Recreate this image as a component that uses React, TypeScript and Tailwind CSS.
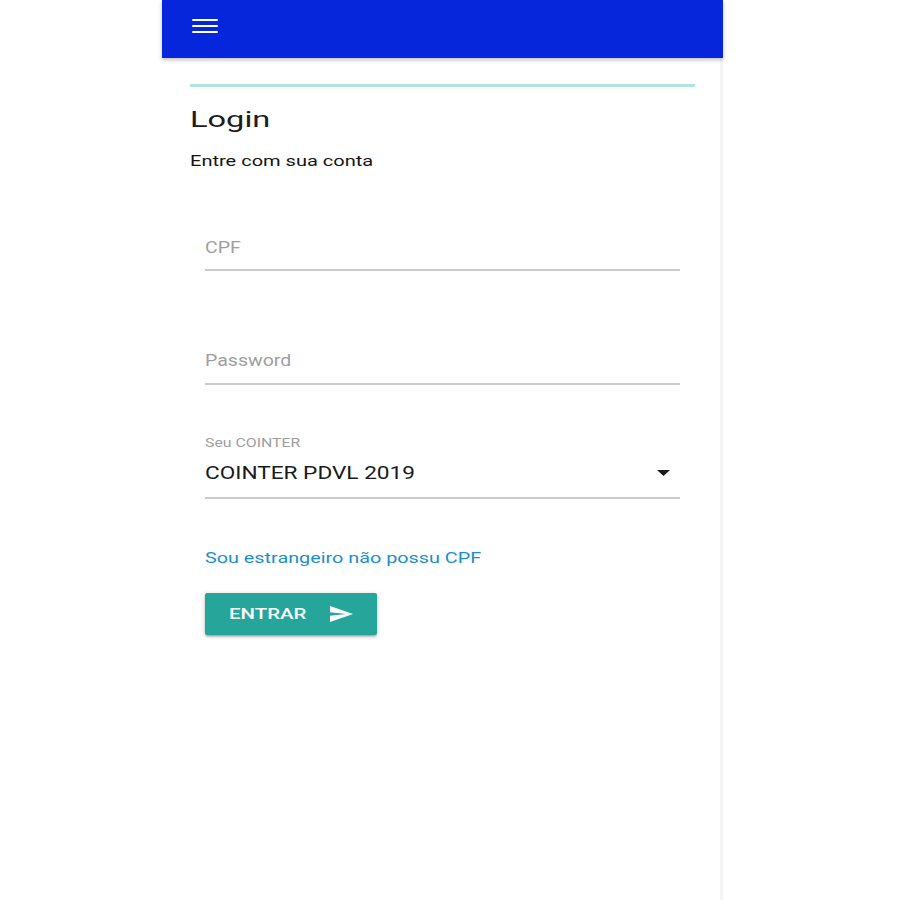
import React from "react";

function Menu() {
  return (
    <svg width="26" height="14" viewBox="0 0 26 14" className="block">
      <rect x="0" y="0" width="26" height="2" rx="1" fill="#ffffff" />
      <rect x="0" y="6" width="26" height="2" rx="1" fill="#ffffff" />
      <rect x="0" y="12" width="26" height="2" rx="1" fill="#ffffff" />
    </svg>
  );
}

function Send() {
  return (
    <svg width="23" height="16" viewBox="2 3 21 18" preserveAspectRatio="none" className="block">
      <path d="M2.01 21L23 12 2.01 3 2 10l15 2-15 2z" fill="#ffffff" />
    </svg>
  );
}

function Caret() {
  return (
    <svg width="13" height="6" viewBox="0 0 13 6" className="block">
      <path d="M0 0h13L6.5 6z" fill="#1a1a1a" />
    </svg>
  );
}

export default function App() {
  return (
    <div
      className="w-[900px] h-[900px] bg-white flex"
      style={{ fontFamily: "Roboto, 'Noto Sans', sans-serif" }}
    >
      <div className="w-[162px] shrink-0" />
      <div className="w-[561px] shrink-0 h-[900px] flex flex-col">
        <header className="h-[58px] shrink-0 bg-[#0626db] pl-[30px] pt-[19px] shadow-[0_2px_4px_rgba(0,0,0,0.25)] relative z-10">
          <Menu />
        </header>
        <div className="flex-1 border-r-[3px] border-[#f5f5f5] pl-[28px] pr-[25px]">
          <div className="mt-[26px] h-[3px] bg-[#aee6e4]" />
          <div className="mt-[22px] h-[22px] text-[22px] leading-[22px] text-[#1c1c1c]">
            <span className="inline-block origin-left scale-x-[1.48]">Login</span>
          </div>
          <div className="mt-[23px] h-[14px] text-[14px] leading-[14px] text-[#141414]">
            <span className="inline-block origin-left scale-x-[1.43]">Entre com sua conta</span>
          </div>

          <div className="px-[15px]">
            <div className="mt-[72px] h-[16px] text-[16px] leading-[16px] text-[#9e9e9e]">
              <span className="inline-block origin-left scale-x-[1.22]">CPF</span>
            </div>
            <div className="mt-[13px] h-[2px] bg-[#cbcbcb]" />

            <div className="mt-[82px] h-[16px] text-[16px] leading-[16px] text-[#9e9e9e]">
              <span className="inline-block origin-left scale-x-[1.22]">Password</span>
            </div>
            <div className="mt-[14px] h-[2px] bg-[#cbcbcb]" />

            <div className="mt-[52px] h-[12px] text-[12px] leading-[12px] text-[#9e9e9e]">
              <span className="inline-block origin-left scale-x-[1.32]">Seu COINTER</span>
            </div>
            <div className="mt-[14px] h-[19px] flex items-center justify-between text-[19px] leading-[19px] text-[#1a1a1a]">
              <span className="inline-block origin-left scale-x-[1.19]">COINTER PDVL 2019</span>
              <div className="mr-[10px]">
                <Caret />
              </div>
            </div>
            <div className="mt-[15px] h-[2px] bg-[#cbcbcb]" />

            <div className="mt-[52px] h-[15px] text-[15px] leading-[15px] text-[#1a8ecf]">
              <span className="inline-block origin-left scale-x-[1.32]">Sou estrangeiro não possu CPF</span>
            </div>

            <button className="mt-[27px] w-[172px] h-[42px] rounded-[2px] bg-[#26a69a] flex items-center pl-[24px] shadow-[0_2px_2px_0_rgba(0,0,0,0.14),0_3px_1px_-2px_rgba(0,0,0,0.12),0_1px_5px_0_rgba(0,0,0,0.2)]">
              <span className="w-[78px] text-left text-[15px] leading-[15px] font-medium text-white">
                <span className="inline-block origin-left scale-x-[1.36]">ENTRAR</span>
              </span>
              <span className="ml-[23px]">
                <Send />
              </span>
            </button>
          </div>
        </div>
      </div>
    </div>
  );
}
